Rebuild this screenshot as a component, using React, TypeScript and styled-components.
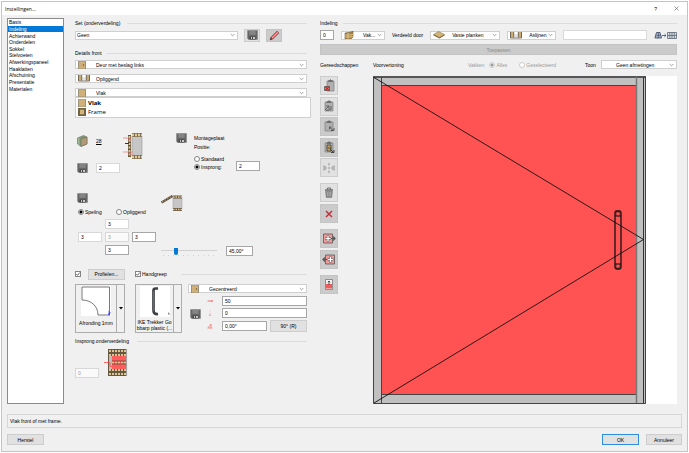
import React from "react";
import styled, { createGlobalStyle, css } from "styled-components";

const GlobalStyle = createGlobalStyle`
  * { box-sizing: border-box; }
  body { margin: 0; background: #fff; }
  body, button, input, select {
    font-family: "Liberation Sans", Arial, sans-serif;
    font-size: 5px;
    line-height: 6px;
    color: #000;
  }
  svg { display: block; flex: none; }
`;

/* ---------- window ---------- */
const Window = styled.div`
  display: flex;
  flex-direction: column;
  min-height: calc(100vh - 2px);
  margin: 1px 1px 1px;
  border: 1px solid #c4c4c4;
  background: #f0f0f0;
`;
const TitleBar = styled.header`
  display: flex;
  align-items: center;
  height: 13px;
  padding: 0 8px 0 3px;
  background: #fff;
  font-family: "Open Sans", sans-serif;
`;
const Title = styled.h1`
  flex: 1;
  margin: 0;
  font-size: 5px;
  font-weight: 400;
`;
const TitleButton = styled.button`
  padding: 0;
  margin-left: 17px;
  border: 0;
  background: none;
`;
const Content = styled.div`
  display: grid;
  grid-template-columns: 57px 232px minmax(0, 1fr);
  padding: 3px 10px 0 5px;
`;
const Sidebar = styled.nav`
  border: 1px solid #8a8a8a;
  background: #fff;
`;
const NavList = styled.ul`
  display: grid;
  grid-auto-rows: 1fr;
  height: 73px;
  margin: 0;
  padding: 0;
  list-style: none;
`;
const NavLink = styled.a<{ $active?: boolean }>`
  display: flex;
  align-items: center;
  height: 100%;
  padding-left: 1px;
  text-decoration: none;
  color: ${(p) => (p.$active ? "#fff" : "#000")};
  background: ${(p) => (p.$active ? "#0078d7" : "transparent")};
`;
const Column = styled.main`
  margin-left: 11px;
  margin-right: -11px;
  padding-top: 1px;
`;
const RightColumn = styled.section`
  margin-left: 24px;
  padding-top: 1px;
`;

/* ---------- shared parts ---------- */
const HeadingRow = styled.h2<{ $top?: number; $gap?: number }>`
  display: flex;
  align-items: center;
  gap: ${(p) => p.$gap ?? 7}px;
  height: 8px;
  margin: ${(p) => p.$top ?? 0}px 0 0;
  font-size: 5px;
  font-weight: 400;
  white-space: nowrap;
  &::after {
    content: "";
    flex: 1;
    height: 1px;
    background: #dcdcdc;
  }
`;
const Rule = styled.span`
  flex: 1;
  height: 1px;
  background: #dcdcdc;
`;
const Row = styled.div<{ $top?: number; $gap?: number; $h?: number }>`
  display: flex;
  align-items: center;
  gap: ${(p) => p.$gap ?? 0}px;
  margin-top: ${(p) => p.$top ?? 0}px;
  ${(p) => p.$h && css`height: ${p.$h}px;`}
`;
const Stack = styled.div<{ $gap?: number; $top?: number }>`
  display: flex;
  flex-direction: column;
  align-items: flex-start;
  gap: ${(p) => p.$gap ?? 0}px;
  margin-top: ${(p) => p.$top ?? 0}px;
`;
const Field = styled.input<{ $w?: number; $soft?: boolean }>`
  ${(p) => (p.$w ? css`width: ${p.$w}px; flex: none;` : css`flex: 1; width: 0;`)}
  height: 10px;
  padding: 0 2px 1px;
  border: 1px solid ${(p) => (p.$soft ? "#d8d8d8" : "#a6a6a6")};
  border-radius: 0;
  background: #fff;
  outline: 0;
  &:disabled { color: #999; background: #fafafa; }
`;
const Combo = styled.div<{ $w?: number }>`
  display: flex;
  align-items: center;
  ${(p) => (p.$w ? css`width: ${p.$w}px; flex: none;` : css`flex: 1;`)}
  height: 9px;
  padding-right: 2px;
  border: 1px solid #cfcfcf;
  background: #fff;
`;
const ComboIcon = styled.span`
  display: flex;
  margin-left: 2px;
`;
const ComboSelect = styled.select<{ $pad: number }>`
  appearance: none;
  flex: 1;
  width: 0;
  height: 7px;
  padding: 0 0 0 ${(p) => p.$pad}px;
  border: 0;
  outline: 0;
  background: none;
`;
const Button = styled.button<{ $w?: number; $h?: number; $dark?: boolean; $primary?: boolean }>`
  display: flex;
  align-items: center;
  justify-content: center;
  flex: none;
  width: ${(p) => (p.$w ? p.$w + "px" : "100%")};
  height: ${(p) => p.$h ?? 11}px;
  padding: 0;
  border: 1px solid ${(p) => (p.$primary ? "#2f8ede" : p.$dark ? "#c4c4c4" : "#cdcdcd")};
  background: ${(p) => (p.$dark ? "#cbcbcb" : "#e1e1e1")};
  &:disabled { color: #8c8c8c; }
`;
const Option = styled.label<{ $muted?: boolean }>`
  display: flex;
  align-items: center;
  gap: 1px;
  height: 6px;
  white-space: nowrap;
  color: ${(p) => (p.$muted ? "#9a9a9a" : "#000")};
`;
const Radio = styled.input.attrs({ type: "radio" })`
  appearance: none;
  width: 6px;
  height: 6px;
  margin: 0;
  border: 1px solid #858585;
  border-radius: 50%;
  background: #fff;
  &:checked { background: radial-gradient(circle, #000 0 1px, #fff 2px); }
  &:disabled { border-color: #ccc; }
  &:disabled:checked { background: radial-gradient(circle, #999 0 1px, #fff 2px); }
`;
const CheckWrap = styled.label`
  display: grid;
  grid-template-columns: 6px auto;
  align-items: center;
  column-gap: 1px;
  svg, input { grid-area: 1 / 1; }
  svg { pointer-events: none; }
`;
const CheckBox = styled.input.attrs({ type: "checkbox" })`
  appearance: none;
  width: 6px;
  height: 6px;
  margin: 0;
  border: 1px solid #858585;
  background: #fff;
`;
const Muted = styled.span`
  color: #9a9a9a;
`;

/* ---------- left column ---------- */
const SetButtons = styled.div`
  display: flex;
  gap: 6px;
  margin-left: 6px;
`;
const FrontSelects = styled.div`
  position: relative;
  display: flex;
  flex-direction: column;
  gap: 5px;
  margin-top: 3px;
  ${Combo} { flex: none; }
`;
const Popup = styled.ul`
  position: absolute;
  top: 100%;
  left: 0;
  right: -4px;
  display: grid;
  grid-auto-rows: 9px;
  margin: 0;
  padding: 0 2px 1px;
  border: 1px solid #cfcfcf;
  background: #fff;
  list-style: none;
  font: 6px/8px "Open Sans", sans-serif;
`;
const PopupItem = styled.li<{ $selected?: boolean }>`
  display: flex;
  align-items: center;
  gap: 2px;
  font-weight: ${(p) => (p.$selected ? 700 : 400)};
`;
const MountGrid = styled.div`
  display: grid;
  grid-template-columns: 19px 27px 53px 18px 42px 25px;
  height: 40px;
  margin: 36px 0 0 2px;
`;
const Spread = styled.div`
  display: flex;
  flex-direction: column;
  align-items: flex-start;
  justify-content: space-between;
  padding-top: 2px;
`;
const Thickness = styled.a`
  margin-top: 3px;
  color: #000;
`;
const BottomCell = styled.div`
  align-self: end;
  padding-bottom: 2px;
`;
const ClearanceGrid = styled.div`
  display: grid;
  grid-template-columns: 84px 1fr;
  margin: 20px 0 0 2px;
`;
const ClearanceOptions = styled.div`
  display: grid;
  grid-template-columns: 38px auto;
  margin: 6px 0 0 1px;
`;
const Cross = styled.div`
  display: grid;
  grid-template-columns: repeat(3, 24px);
  grid-template-areas: ". t ." "l c r" ". b .";
  gap: 3px;
  margin: 4px 0 0 1px;
`;
const CrossField = styled(Field)<{ $area: string }>`
  grid-area: ${(p) => p.$area};
`;
const Slider = styled.input.attrs({ type: "range" })`
  appearance: none;
  width: 56px;
  height: 12px;
  margin: 0 9px 0 0;
  background:
    linear-gradient(#d0d0d0, #d0d0d0) 0 5px / 100% 1px no-repeat,
    repeating-linear-gradient(90deg, #d0d0d0 0 1px, transparent 1px 5px) 2px 10px / 52px 1px no-repeat;
  &::-webkit-slider-thumb {
    appearance: none;
    width: 4px;
    height: 7px;
    background: #0078d7;
    border-radius: 0 0 2px 2px;
  }
`;
const HandleHeader = styled.div`
  display: grid;
  grid-template-columns: 13px 47px 46px minmax(0, 1fr);
  align-items: center;
  height: 12px;
  margin-top: 11px;
`;
const PickerRow = styled.div`
  display: grid;
  grid-template-columns: 60px 53px minmax(0, 1fr);
  margin-top: 4px;
`;
const Picker = styled.button<{ $w: number }>`
  display: grid;
  grid-template-columns: minmax(0, 1fr) 8px;
  width: ${(p) => p.$w}px;
  height: 49px;
  padding: 0;
  border: 1px solid #adadad;
  background: #f0f0f0;
  text-align: center;
`;
const PickerFace = styled.span`
  display: flex;
  flex-direction: column;
  align-items: center;
  justify-content: flex-start;
  gap: 2px;
  height: 100%;
  padding-top: 1px;
`;
const PickerArrow = styled.span`
  display: flex;
  align-items: center;
  justify-content: center;
  height: 100%;
  border-left: 1px solid #adadad;
`;
const PickerText = styled.span<{ $top?: number }>`
  margin-top: ${(p) => p.$top ?? 0}px;
  white-space: nowrap;
`;
const HandlePlacement = styled.div`
  ${Combo} { flex: none; }
`;
const HandleForm = styled.div`
  display: grid;
  grid-template-columns: 19px 15px minmax(0, 1fr);
  row-gap: 2px;
  align-items: center;
  margin-top: 3px;
`;
const FormSave = styled.div`
  grid-row: 1 / 4;
  padding-left: 2px;
`;

/* ---------- right column ---------- */
const ToolArea = styled.div`
  display: grid;
  grid-template-columns: 18px minmax(0, 1fr);
  gap: 35px;
  margin-top: 6px;
`;
const Tools = styled.div`
  display: flex;
  flex-direction: column;
`;
const Tool = styled(Button)<{ $top?: number }>`
  width: 18px;
  height: 19px;
  margin-top: ${(p) => p.$top ?? 0}px;
  margin-bottom: 1px;
`;
const Preview = styled.div`
  background: #fff;
  svg { width: 100%; height: auto; }
`;
const End = styled.div`
  display: flex;
  align-items: center;
  margin-left: auto;
`;
const Scope = styled.div`
  display: flex;
  gap: 12px;
  margin: 0 29px 0 5px;
`;
const Label = styled.span<{ $w?: number }>`
  white-space: nowrap;
  ${(p) => p.$w && css`width: ${p.$w}px; flex: none;`}
`;

/* ---------- footer ---------- */
const Status = styled.p`
  display: flex;
  align-items: center;
  height: 14px;
  margin: 10px 5px 0;
  padding-left: 2px;
  border: 1px solid #d6d6d6;
`;
const Footer = styled.footer`
  display: flex;
  gap: 7px;
  margin: 6px 5px 5px;
`;
const FooterSpace = styled.span`
  flex: 1;
`;

/* ---------- drawings ---------- */
const Chevron = () => (
  <svg width="5" height="4" viewBox="0 0 5 4"><path d="M.7 1 2.5 2.8 4.3 1" fill="none" stroke="#777" strokeWidth=".7" /></svg>
);
const Save = () => (
  <svg width="11" height="10" viewBox="0 0 11 10">
    <path d="M.5.5h10v9H1.5l-1-1z" fill="#666" stroke="#8a8a8a" strokeWidth=".6" />
    <path d="M2.3.8h6.4v4H2.3z" fill="#858585" />
    <path d="M2.5 6.5h6v3h-6z" fill="#444" /><path d="M4 7h1v2H4zM6 7h2v2H6z" fill="#c8c8c8" />
  </svg>
);
const Pencil = () => (
  <svg width="11" height="11" viewBox="0 0 11 11">
    <path d="M1.2 9.8 2 7 8 1l2 2-6 6z" fill="#cf6668" stroke="#7d4a4a" strokeWidth=".6" />
    <path d="M3 8 8.8 2.2" stroke="#f7c5c5" strokeWidth=".7" /><path d="m1 10 .8-2.4L3.5 9z" fill="#333" />
  </svg>
);
const Panel = ({ kind }: { kind: "door" | "flat" | "frame" }) => (
  <svg width="8" height="8" viewBox="0 0 8 8">
    <path d="M0 0h8v8H0z" fill={kind === "frame" ? "#6f6248" : "#9a907c"} />
    {kind === "frame" ? <path d="M2 1.7h4v4.6H2z" fill="#d3b577" /> : <path d="M1 .5h6v7H1z" fill="#cfb07a" />}
    {kind === "door" && <circle cx="5.5" cy="4" r=".7" fill="#6b4d1c" />}
  </svg>
);
const Rails = () => (
  <svg width="12" height="7" viewBox="0 0 12 7">
    <path d="M.5 0h3v5.500h-3zM8.500 0h3v5.500h-3z" fill="#c9ab74" /><path d="M3.700 0v5.500M8.300 0v5.500M.5 0v6h11V0" fill="none" stroke="#554a38" strokeWidth=".8" />
    <path d="M5 2v3M7 2v3" stroke="#aaa" strokeWidth=".6" />
  </svg>
);
const Boards = () => (
  <svg width="10" height="8" viewBox="0 0 10 8">
    <path d="m1 2 6-1 2-1v6L7 8H1z" fill="#a98748" stroke="#54431f" strokeWidth=".5" />
    <path d="M1 4h6l2-1M1 6h6l2-1M4 2v6" fill="none" stroke="#f0d89c" strokeWidth=".7" />
  </svg>
);
const Shelf = () => (
  <svg width="12" height="8" viewBox="0 0 12 8"><path d="m.5 3.5 5-3 6 3-5 3z" fill="#d3b478" stroke="#80683a" strokeWidth=".5" /><path d="m.5 3.5 6 3 5-3v1l-5 3-6-3z" fill="#765f32" /></svg>
);
const PanelStack = () => (
  <svg width="11" height="12" viewBox="0 0 11 12">
    <path d="m.5 3 6-2.5L10 2v7l-6 2.5L.5 9z" fill="#7e9a78" stroke="#657365" strokeWidth=".6" />
    <path d="m4 4 6-2v7l-6 2.3z" fill="#b09a7a" stroke="#70604a" strokeWidth=".5" /><path d="M1.8 3v7" stroke="#b7d3b0" strokeWidth=".8" />
  </svg>
);
const Plies = ({ x, y, w }: { x: number; y: number; w: number }) => (
  <g><path d={`M${x} ${y}h${w}v4h-${w}z`} fill="#7d6d52" /><path d={`M${x} ${y + 2}h${w}`} stroke="#e2cb99" strokeWidth="2.4" strokeDasharray="2 1" /></g>
);
const MountDrawing = () => (
  <svg width="20" height="26" viewBox="0 0 20 26">
    <path d="M9 3h10v20H9z" fill="#c6c6c6" stroke="#999" strokeWidth=".6" /><Plies x={9} y={0} w={10} /><Plies x={9} y={22} w={10} />
    <path d="M6.5 2v22" stroke="#64543b" strokeWidth="3" /><path d="M6.5 3v20" stroke="#e2cb99" strokeWidth="1.8" strokeDasharray="2 1.5" />
    <path d="M0 5h7v4M0 19h10M6 21h4" fill="none" stroke="#f28b8b" strokeWidth=".9" /><path d="M2 10.5h4" stroke="#333" />
  </svg>
);
const HingeDrawing = () => (
  <svg width="22" height="16" viewBox="0 0 22 16">
    <path d="M12 2h9v12h-9z" fill="#c6c6c6" stroke="#999" strokeWidth=".5" />
    <path d="M12 2h9M12 14.5h9" stroke="#665740" strokeWidth="3" /><path d="M12 2h9M12 14.5h9" stroke="#e2cb99" strokeWidth="1.5" strokeDasharray="1.5 1" />
    <path d="M.5 7.5 11.5 1" stroke="#584b37" strokeWidth="2.4" /><path d="M1 7 11 1.2" stroke="#c9b486" strokeDasharray="1.5 1.5" />
  </svg>
);
const InsetDrawing = () => (
  <svg width="24" height="27" viewBox="0 0 24 27">
    <path d="M4 0h19v27H4z" fill="#665740" /><path d="M5 7h3v13H5z" fill="#bbb" /><path d="M8 7h14v13H8z" fill="#ff5c5c" />
    <path d="M5 2h17M5 6h17M8 13.500h14M5 21h17M5 25h17" stroke="#dcc592" strokeWidth="2" strokeDasharray="2 1" />
    <path d="M8 12h14M8 15h14" stroke="#554632" strokeWidth=".7" /><path d="M0 13.5h6v4h2" fill="none" stroke="#ff4444" strokeWidth=".8" />
    <path d="M22.6 0v27" stroke="#aaa" />
  </svg>
);
const Rounding = () => (
  <svg width="30" height="30" viewBox="0 0 30 30">
    <path d="M0 0h30v30H0z" fill="#fff" /><path d="M1 1h27.500v28H17C17 20 10 14 1 14z" fill="#fff" stroke="#555" strokeWidth=".8" />
    <path d="M27 26h2v1.500h-1.500V29H29" fill="none" stroke="#33f" strokeWidth=".7" />
  </svg>
);
const Grip = () => (
  <svg width="30" height="31" viewBox="0 0 30 31">
    <path d="M0 0h30v31H0z" fill="#fff" /><path d="M18 2.500h-2.500q-2 0-2 2v20q0 4 4.500 3.500" fill="none" stroke="#3d3f42" strokeWidth="2.700" />
    <path d="M13.500 5v20" stroke="#85888b" strokeWidth=".6" /><path d="M28 27h1v2" stroke="#333" strokeWidth=".6" fill="none" />
  </svg>
);
const Triangle = () => <svg width="4" height="3" viewBox="0 0 4 3"><path d="M0 0h4L2 2.500z" /></svg>;
const Axis = ({ kind }: { kind: "x" | "y" | "a" }) => (
  <svg width="6" height="6" viewBox="0 0 6 6" fill="none" stroke="#f25050" strokeWidth=".8">
    {kind === "x" && <path d="M.5 3h5M4.500 2l1 1-1 1" />}
    {kind === "y" && <path d="M3 .5v1M3 3v2.500M2 5.500h2" stroke="#f79a9a" />}
    {kind === "a" && <path d="M.5 5h5M1 5l3-4v4" stroke="#f57777" />}
  </svg>
);
const Tick = () => <svg width="6" height="6" viewBox="0 0 6 6"><path d="m1.300 3 1.200 1.300L4.800 1.500" fill="none" stroke="#222" strokeWidth=".7" /></svg>;
const Convert = () => (
  <svg width="23" height="9" viewBox="0 0 23 9" fill="none">
    <path d="M1 6.500 2.500 1.500H6L7.500 7H1z" fill="#a8b6cb" stroke="#43516a" strokeWidth=".9" /><path d="M2.500 4.500h4M4.300 2v5" stroke="#43516a" strokeWidth=".7" />
    <path d="M8 4.500h4M10.500 3.200l1.500 1.300-1.500 1.300" stroke="#33507a" strokeWidth=".8" />
    <path d="M13.500 1.500h9v6h-9zM13.500 4.500h9M15.800 1.500v6M18 1.500v6M20.300 1.500v6" fill="#dbe1ea" stroke="#5a6472" strokeWidth=".8" />
  </svg>
);
const Clipboard = ({ kind }: { kind: string }) => (
  <svg width="12" height="13" viewBox="0 0 12 13" fill="none">
    <path d={kind === "delete" ? "M4 2h7v10H4z" : "M2 2h8v9H2z"} fill="#b0b0b0" stroke="#808080" strokeWidth=".7" />
    <path d={kind === "delete" ? "M5.500 2.500v-1h1L7.500.5l1 1h1v1z" : "M4 2.500v-1h1L6 .5l1 1h1v1z"} fill="#666" stroke="#666" strokeWidth=".6" />
    {kind === "delete" && <><path d="M1.500 7.500h5v4h-5z" fill="#e69b9b" stroke="#444" strokeWidth=".7" /><path d="m2.300 8 3.500 3M5.800 8l-3.500 3" stroke="#e01c1c" strokeWidth="1.200" /></>}
    {kind === "link" && <path d="m2 10 4-4m-3 0h3v3M3 10.500l5-1V6" stroke="#5c5c5c" strokeWidth=".9" />}
    {kind === "paste" && <path d="m6.500 7 4 4M8 10.500h3V8M6.500 9V7h2" stroke="#555" />}
    {kind === "special" && <><path d="M4 4h4v6H4z" fill="#c9a85e" stroke="#4b4538" strokeWidth=".9" /><path d="M4.500 7H8M7 8l3.500 3.500M8 11.500h3V9" stroke="#444" /></>}
  </svg>
);
const Distribute = () => (
  <svg width="12" height="10" viewBox="0 0 12 10" fill="none" stroke="#808080" strokeWidth=".8"><path d="M6 0v2.500M6 7.500V10M6 4v2M1 2.500v5M1.500 3 3.500 5l-2 2M11 2.500v5M10.500 3l-2 2 2 2" /></svg>
);
const Bin = () => (
  <svg width="10" height="11" viewBox="0 0 10 11"><path d="M1.500 3.500h7l-.7 7H2.200z" fill="#8b8b8b" stroke="#707070" strokeWidth=".5" /><path d="M1 2.800h8M3.500 2.500V1h3v1.500" fill="none" stroke="#666" /><path d="M3.500 5v4M5 5v4M6.500 5v4" stroke="#bbb" strokeWidth=".5" /></svg>
);
const Cross2 = () => <svg width="8" height="8" viewBox="0 0 8 8"><path d="m1 1 6 6M7 1 1 7" stroke="#c5323a" strokeWidth="1.500" /></svg>;
const Transfer = ({ left }: { left?: boolean }) => (
  <svg width="14" height="11" viewBox="0 0 14 11" fill="none">
    <path d={left ? "M3.500 1h9v9h-9z" : "M1.500 1h9v9h-9z"} fill="#f59a9a" stroke="#555" strokeWidth=".8" />
    <path d={left ? "M8.500 2.500v6M5.500 5.500h6" : "M6 2.500v6M3 5.500h6"} stroke="#777" strokeWidth="2.600" />
    <path d={left ? "M8.500 3v5M6 5.500h5" : "M6 3v5M3.500 5.500h5"} stroke="#fff" strokeWidth="1.200" />
    <path d={left ? "M5 5.500H1M3 3.500l-2 2 2 2" : "M9 5.500h4M11 3.500l2 2-2 2"} stroke="#555" strokeWidth="1.200" />
  </svg>
);
const Sheet = () => (
  <svg width="8" height="11" viewBox="0 0 8 11"><path d="M.5.5h7v10h-7z" fill="#f2f2f2" stroke="#777" strokeWidth=".8" /><path d="M1 5h6v4.500H1z" fill="#f25b5b" /><path d="M4 2v4M2.800 3.200 4 2l1.200 1.200" fill="none" stroke="#444" strokeWidth=".9" /></svg>
);
const CabinetFront = () => (
  <svg viewBox="0 0 304 328" role="img" aria-label="Voorvertoning">
    <path d="M0 0h273v328H0z" fill="#c0c0c0" />
    <path d="M9 10h254v308H9z" fill="#ff5353" />
    <g fill="none" stroke="#444">
      <path d="M.5 1v326.500h272V1" /><path d="M0 1h273" strokeWidth="1.500" stroke="#333" />
      <path d="M8.500 1v326M8 9.500h256M8 318.500h256" /><path d="M263.500 1v326" stroke="#777" strokeWidth="1.500" />
      <path d="M270.500 1v326" stroke="#333" />
    </g>
    <path d="M1 1.500 270.500 163.500 1 327" fill="none" stroke="#111" strokeWidth=".9" />
    <g fill="none" stroke="#111" strokeWidth="1.300">
      <rect x="242" y="135" width="6" height="58" rx="1.800" />
      <path d="M242 140h6M242 188h6" strokeWidth=".8" /><rect x="243" y="136" width="4" height="4" strokeWidth=".5" /><rect x="243" y="188" width="4" height="4" strokeWidth=".5" />
    </g>
  </svg>
);

/* ---------- composed controls ---------- */
type DropProps = { label: string; value: string; pad?: number; w?: number; icon?: React.ReactNode };
const Drop = ({ label, value, pad = 1, w, icon }: DropProps) => (
  <Combo $w={w}>
    {icon && <ComboIcon>{icon}</ComboIcon>}
    <ComboSelect $pad={pad} aria-label={label}><option>{value}</option></ComboSelect>
    <Chevron />
  </Combo>
);
const Check = ({ label, hidden }: { label: string; hidden?: boolean }) => (
  <CheckWrap>
    <CheckBox defaultChecked aria-label={label} /><Tick />{!hidden && <span>{label}</span>}
  </CheckWrap>
);

const pages = ["Basis", "Indeling", "Achterwand", "Onderdelen", "Sokkel", "Stelvoeten", "Afwerkingspaneel", "Haaklatten", "Afschuining", "Presentatie", "Materialen"];

const FrontPanel = () => (
  <Column>
    <HeadingRow>Set (onderverdeling)</HeadingRow>
    <Row $top={1} $h={14}>
      <Drop label="Set" value="Geen" w={163} />
      <SetButtons>
        <Button $w={16} $h={13} aria-label="Opslaan"><Save /></Button>
        <Button $w={16} $h={13} $dark aria-label="Bewerken"><Pencil /></Button>
      </SetButtons>
    </Row>
    <HeadingRow $top={7} $gap={5}>Details front</HeadingRow>
    <FrontSelects>
      <Drop label="Fronttype" value="Deur met beslag links" pad={10} icon={<Panel kind="door" />} />
      <Drop label="Montage" value="Opliggend" pad={6} icon={<Rails />} />
      <Drop label="Uitvoering" value="Vlak" pad={10} icon={<Panel kind="flat" />} />
      <Popup>
        <PopupItem $selected><Panel kind="flat" />Vlak</PopupItem>
        <PopupItem><Panel kind="frame" />Frame</PopupItem>
      </Popup>
    </FrontSelects>

    <MountGrid>
      <Spread><PanelStack /><Save /></Spread>
      <Spread><Thickness href="#dikte">28</Thickness><Field $w={24} $soft defaultValue="2" aria-label="Afstand" /></Spread>
      <MountDrawing />
      <Save />
      <Stack $gap={3} $top={2}>
        <span>Montageplaat</span><span>Positie:</span>
        <Stack $gap={2} $top={3}>
          <Option><Radio name="positie" />Standaard</Option>
          <Option><Radio name="positie" defaultChecked />Insprong:</Option>
        </Stack>
      </Stack>
      <BottomCell><Field $w={24} defaultValue="2" aria-label="Insprong" /></BottomCell>
    </MountGrid>

    <ClearanceGrid>
      <Stack>
        <Save />
        <ClearanceOptions>
          <Option><Radio name="speling" defaultChecked />Speling</Option>
          <Option><Radio name="speling" />Opliggend</Option>
        </ClearanceOptions>
        <Cross>
          <CrossField $area="t" $w={24} $soft defaultValue="3" aria-label="Boven" />
          <CrossField $area="l" $w={24} $soft defaultValue="3" aria-label="Links" />
          <CrossField $area="c" $w={24} $soft disabled defaultValue="3" aria-label="Midden" />
          <CrossField $area="r" $w={24} defaultValue="3" aria-label="Rechts" />
          <CrossField $area="b" $w={24} defaultValue="3" aria-label="Onder" />
        </Cross>
      </Stack>
      <Stack $gap={34} $top={2}>
        <HingeDrawing />
        <Row><Slider min={0} max={180} defaultValue={45} aria-label="Hoek" /><Field $w={27} defaultValue="45,00°" aria-label="Hoek in graden" /></Row>
      </Stack>
    </ClearanceGrid>

    <HandleHeader>
      <Check label="Profielen" hidden />
      <Button $w={37} $h={11}>Profielen...</Button>
      <Check label="Handgreep" />
      <Row><Rule /></Row>
    </HandleHeader>

    <PickerRow>
      <Picker $w={50}>
        <PickerFace><Rounding /><PickerText $top={2}>Afronding 1mm</PickerText></PickerFace>
        <PickerArrow><Triangle /></PickerArrow>
      </Picker>
      <Picker $w={47}>
        <PickerFace><Grip /><PickerText>IKE Trekker Go<br />bbarp plastic (...</PickerText></PickerFace>
        <PickerArrow><Triangle /></PickerArrow>
      </Picker>
      <HandlePlacement>
        <Drop label="Plaatsing" value="Gecentreerd" pad={10} icon={<Panel kind="door" />} />
        <HandleForm>
          <FormSave><Save /></FormSave>
          <Axis kind="x" /><Row><Field defaultValue="50" aria-label="Horizontaal" /></Row>
          <Axis kind="y" /><Row><Field defaultValue="0" aria-label="Verticaal" /></Row>
          <Axis kind="a" /><Row $gap={3}><Field defaultValue="0,00°" aria-label="Draaiing" /><Button $w={37} $h={12}>90° (R)</Button></Row>
        </HandleForm>
      </HandlePlacement>
    </PickerRow>

    <HeadingRow $top={4} $gap={8}>Insprong onderverdeling</HeadingRow>
    <Row $top={1} $gap={5}>
      <Stack $top={22}><Field $w={24} $soft disabled defaultValue="0" aria-label="Insprong onderverdeling" /></Stack>
      <InsetDrawing />
    </Row>
  </Column>
);

const LayoutPanel = () => (
  <RightColumn>
    <HeadingRow $gap={5}>Indeling</HeadingRow>
    <Row $top={2} $h={12} $gap={7}>
      <Field $w={14} defaultValue="0" aria-label="Aantal" />
      <Drop label="Vakken" value="Vak..." w={44} pad={9} icon={<Boards />} />
      <Label>Verdeeld door</Label>
      <Drop label="Verdeler" value="Vaste planken" w={70} pad={7} icon={<Shelf />} />
      <Drop label="Lijnen" value="Aslijnen" w={49} pad={7} icon={<Rails />} />
      <Field $soft aria-label="Verdeling" />
      <Convert />
    </Row>
    <Row $top={3}><Button disabled $dark $h={11}>Toepassen</Button></Row>
    <Row $top={4} $h={11}>
      <Label $w={53}>Gereedschappen</Label>
      <Label>Voorvertoning</Label>
      <End>
        <Muted>Vakken</Muted>
        <Scope>
          <Option $muted><Radio name="vakken" disabled defaultChecked />Alles</Option>
          <Option $muted><Radio name="vakken" disabled />Geselecteerd</Option>
        </Scope>
        <Label $w={16}>Toon</Label>
        <Drop label="Toon" value="Geen afmetingen" w={76} pad={14} />
      </End>
    </Row>
    <ToolArea>
      <Tools>
        <Tool aria-label="Klembord wissen"><Clipboard kind="delete" /></Tool>
        <Tool $top={1} aria-label="Kopiëren"><Clipboard kind="link" /></Tool>
        <Tool $dark aria-label="Plakken"><Clipboard kind="paste" /></Tool>
        <Tool $dark $top={1} aria-label="Plakken speciaal"><Clipboard kind="special" /></Tool>
        <Tool aria-label="Verdelen"><Distribute /></Tool>
        <Tool $top={5} aria-label="Leegmaken"><Bin /></Tool>
        <Tool $dark $top={1} aria-label="Verwijderen"><Cross2 /></Tool>
        <Tool $dark $top={5} aria-label="Exporteren"><Transfer /></Tool>
        <Tool $dark $top={1} aria-label="Importeren"><Transfer left /></Tool>
        <Tool $dark $top={5} aria-label="Blad"><Sheet /></Tool>
      </Tools>
      <Preview><CabinetFront /></Preview>
    </ToolArea>
  </RightColumn>
);

export default function App() {
  return (
    <>
      <GlobalStyle />
      <Window>
        <TitleBar>
          <Title>Instellingen...</Title>
          <TitleButton aria-label="Help">?</TitleButton>
          <TitleButton aria-label="Sluiten">
            <svg width="5" height="5" viewBox="0 0 5 5"><path d="m.5.5 4 4m0-4-4 4" stroke="#555" strokeWidth=".6" /></svg>
          </TitleButton>
        </TitleBar>
        <Content>
          <Sidebar>
            <NavList>
              {pages.map((p) => <li key={p}><NavLink href={"#" + p} $active={p === "Indeling"}>{p}</NavLink></li>)}
            </NavList>
          </Sidebar>
          <FrontPanel />
          <LayoutPanel />
        </Content>
        <Status>Vlak front of met frame.</Status>
        <Footer>
          <Button $w={37}>Herstel</Button>
          <FooterSpace />
          <Button $w={37} $primary>OK</Button>
          <Button $w={36}>Annuleer</Button>
        </Footer>
      </Window>
    </>
  );
}
